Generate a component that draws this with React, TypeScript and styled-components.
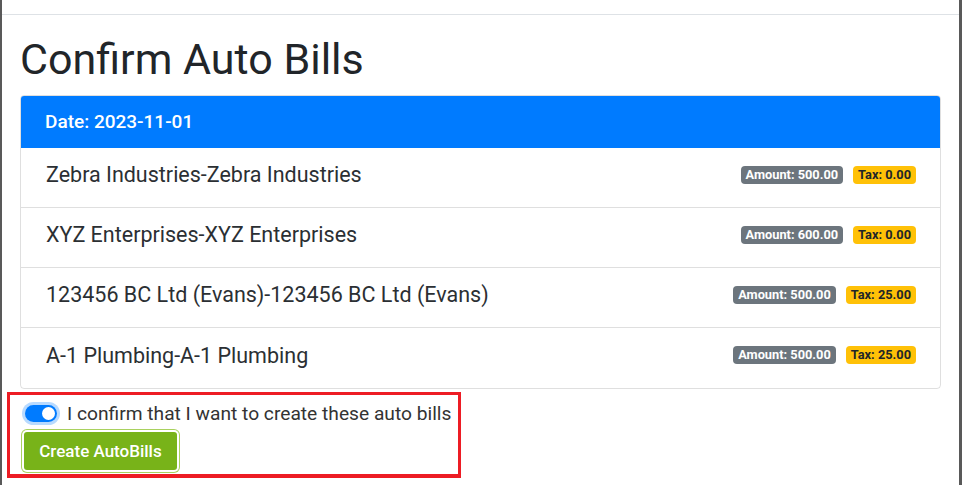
import styled, { createGlobalStyle } from "styled-components";

const GlobalStyle = createGlobalStyle`
  html, body {
    margin: 0;
    padding: 0;
    background: #fff;
  }
  body {
    font-family: Roboto, "Liberation Sans", Arial, sans-serif;
    color: #212529;
  }
`;

interface Bill {
    name: string
    amount: string
    tax: string
}

const bills: Bill[] = [
    { name: "Zebra Industries-Zebra Industries", amount: "500.00", tax: "0.00" },
    { name: "XYZ Enterprises-XYZ Enterprises", amount: "600.00", tax: "0.00" },
    { name: "123456 BC Ltd (Evans)-123456 BC Ltd (Evans)", amount: "500.00", tax: "25.00" },
    { name: "A-1 Plumbing-A-1 Plumbing", amount: "500.00", tax: "25.00" },
];

const Frame = styled.div`
    width: 962px;
    height: 485px;
    box-sizing: border-box;
    border-left: 2px solid #595959;
    border-right: 3px solid #595959;
    padding-top: 14px;
    overflow: hidden;
`;

const Body = styled.div`
    border-top: 1px solid #dee2e6;
    padding: 18px 18px 0 18px;
`;

const Title = styled.h1`
    margin: 0 0 10px 0;
    font-size: 43px;
    font-weight: 400;
    line-height: 52px;
    color: #212529;
`;

const Card = styled.div`
    border: 1px solid rgba(0, 0, 0, 0.125);
    border-radius: 4px;
    overflow: hidden;
`;

const CardHeader = styled.div`
    background: #007bff;
    color: #fff;
    height: 53px;
    display: flex;
    align-items: center;
    padding: 0 25px;
    font-size: 19px;
    font-weight: 500;
    margin: -1px -1px 0 -1px;
`;

const Row = styled.div`
    display: flex;
    align-items: center;
    justify-content: space-between;
    box-sizing: border-box;
    height: 60px;
    padding: 0 24px 6px 25px;
    font-size: 21.5px;
    color: #2b2f33;
    &:not(:last-child) {
        border-bottom: 1px solid rgba(0, 0, 0, 0.125);
    }
`;

const Badges = styled.div`
    display: flex;
    gap: 10px;
`;

const Badge = styled.span<{ $tone: "secondary" | "warning" }>`
    display: inline-block;
    font-size: 12.8px;
    font-weight: 700;
    line-height: 18px;
    padding: 0 5px;
    border-radius: 4px;
    background: ${({ $tone }) => ($tone === "secondary" ? "#6c757d" : "#ffc107")};
    color: ${({ $tone }) => ($tone === "secondary" ? "#fff" : "#212529")};
`;

const Highlight = styled.div`
    margin: 3px 0 0 -13px;
    width: 454px;
    height: 86px;
    box-sizing: border-box;
    border: 3px solid #ed1c24;
    border-bottom-width: 4px;
    padding: 7px 0 0 11px;
`;

const SwitchRow = styled.label`
    display: flex;
    align-items: center;
    gap: 10px;
    font-size: 19.2px;
    color: #333;
    height: 23px;
    padding-left: 4px;
`;

const Switch = styled.span<{ $on: boolean }>`
    position: relative;
    width: 32px;
    height: 17px;
    border-radius: 9px;
    box-sizing: border-box;
    background: ${({ $on }) => ($on ? "#007bff" : "#fff")};
    box-shadow: 0 0 0 3px #b8daff;
    flex-shrink: 0;

    &::after {
        content: "";
        position: absolute;
        top: 2px;
        left: ${({ $on }) => ($on ? "17px" : "2px")};
        width: 13px;
        height: 13px;
        border-radius: 50%;
        background: #fff;
    }
`;

const Button = styled.button`
    display: block;
    margin: 7px 0 0 3px;
    width: 153px;
    height: 38px;
    border: none;
    border-radius: 3px;
    background: #78b319;
    color: #fff;
    font-family: Roboto, "Liberation Sans", Arial, sans-serif;
    font-size: 17px;
    font-weight: 500;
    box-shadow: 0 0 0 2px #fff, 0 0 0 3px #a9d15f;
    cursor: pointer;
`;

export default function App() {
    return (
        <>
            <GlobalStyle />
            <Frame>
                <Body>
                    <Title>Confirm Auto Bills</Title>
                    <Card>
                        <CardHeader>Date: 2023-11-01</CardHeader>
                        {bills.map((bill) => (
                            <Row key={bill.name}>
                                <span>{bill.name}</span>
                                <Badges>
                                    <Badge $tone="secondary">Amount: {bill.amount}</Badge>
                                    <Badge $tone="warning">Tax: {bill.tax}</Badge>
                                </Badges>
                            </Row>
                        ))}
                    </Card>
                    <Highlight>
                        <SwitchRow>
                            <Switch $on />
                            I confirm that I want to create these auto bills
                        </SwitchRow>
                        <Button>Create AutoBills</Button>
                    </Highlight>
                </Body>
            </Frame>
        </>
    );
}
